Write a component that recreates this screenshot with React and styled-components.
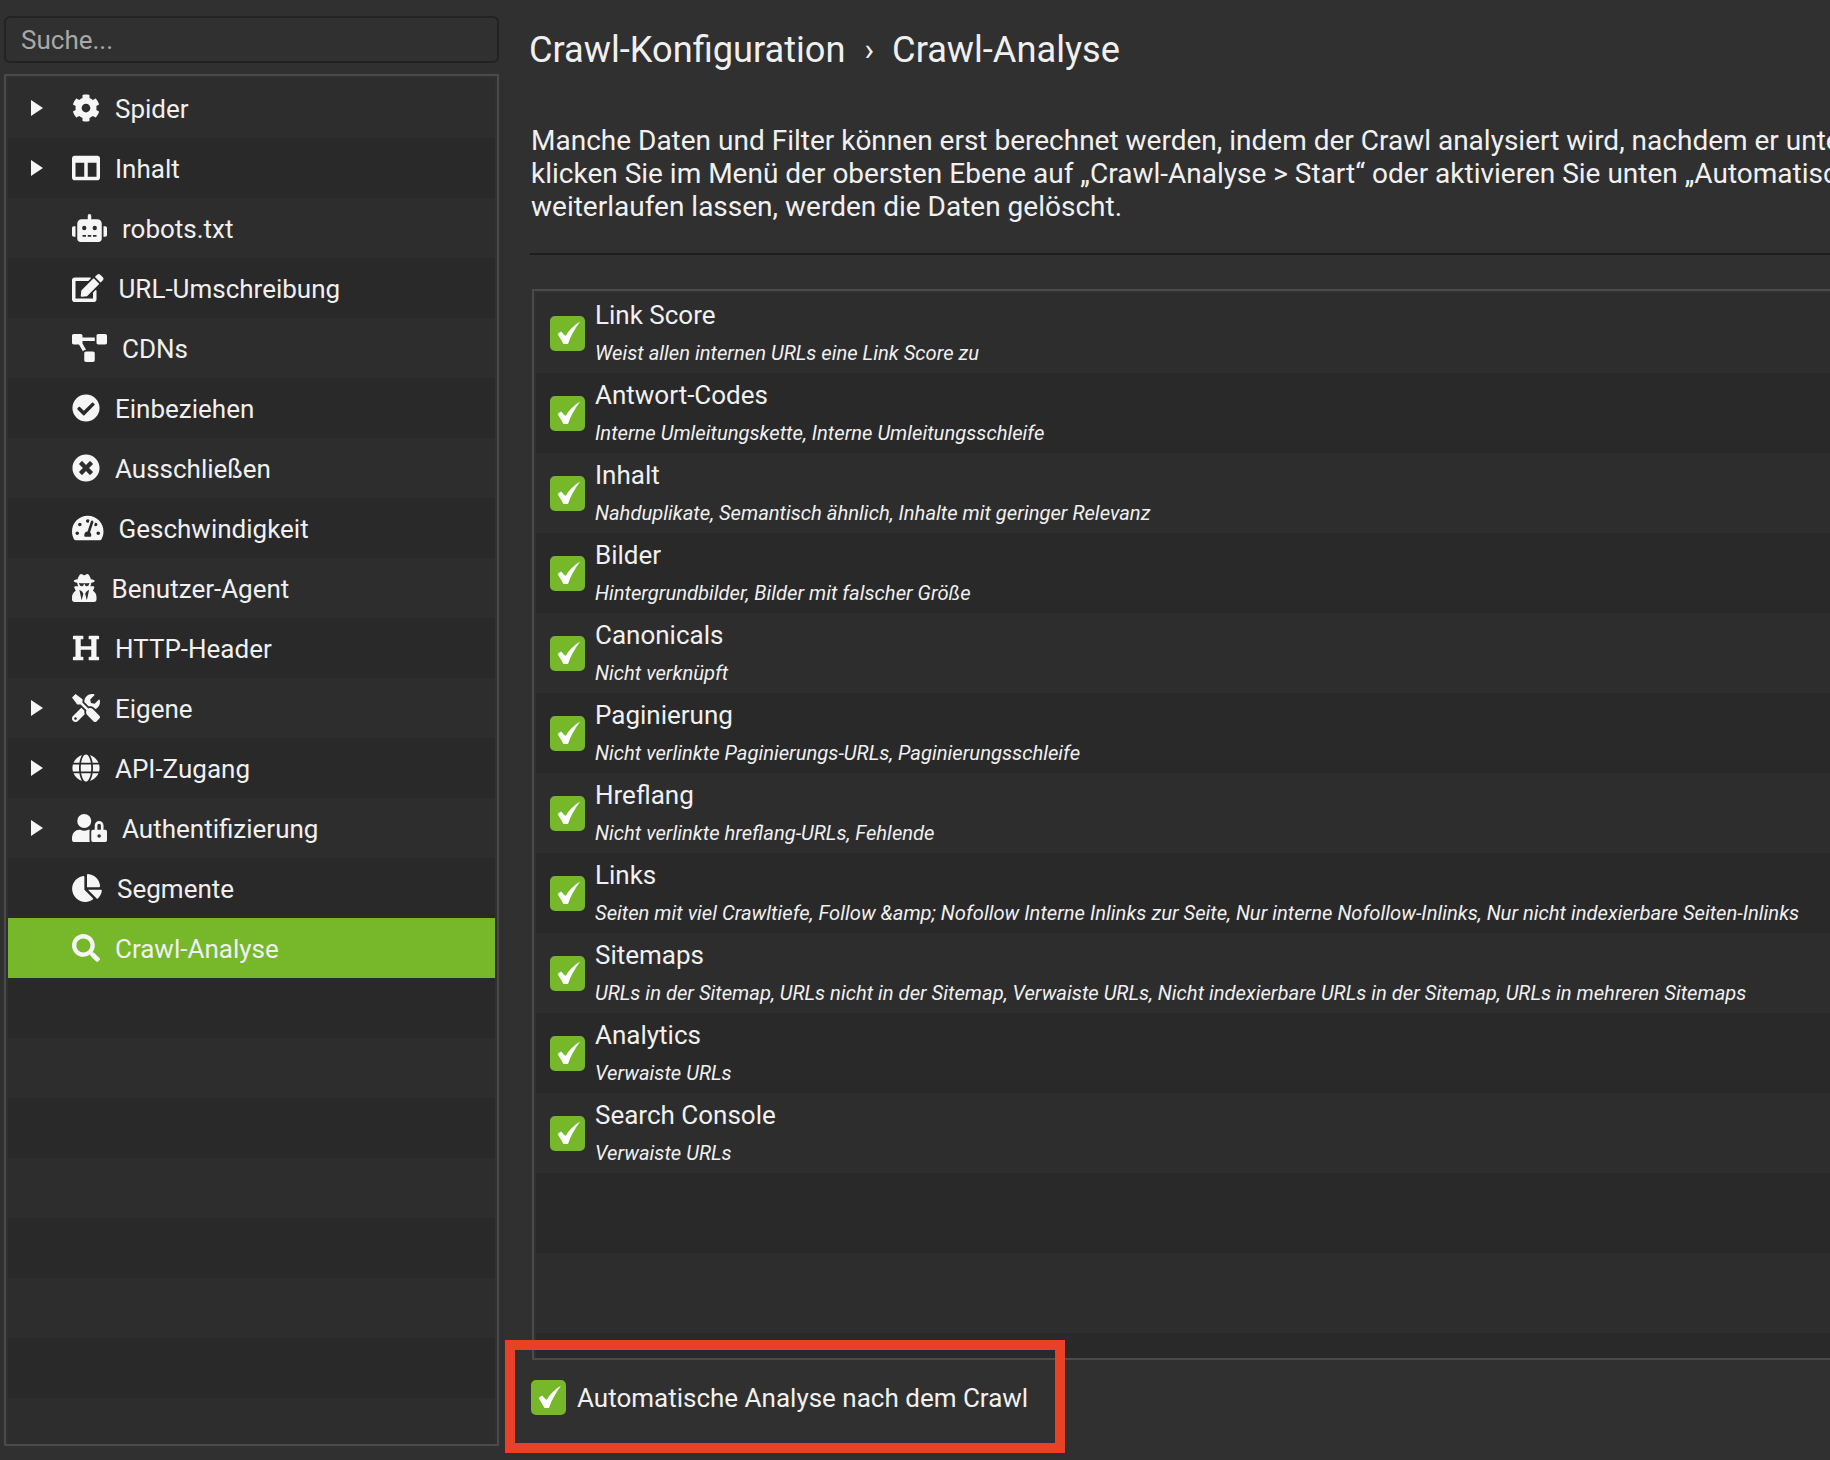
import React from 'react';
import styled, { createGlobalStyle } from 'styled-components';
import {
  FaCog, FaColumns, FaRobot, FaEdit, FaProjectDiagram, FaCheckCircle, FaTimesCircle,
  FaTachometerAlt, FaUserSecret, FaHeading, FaTools, FaGlobe, FaUserLock, FaChartPie, FaSearch,
} from 'react-icons/fa';

const GlobalStyle = createGlobalStyle`
  html, body {
    margin: 0;
    height: 100%;
    overflow: hidden;
    background: #303030;
  }
  * { box-sizing: border-box; }
`;

const Page = styled.div`
  display: flex;
  height: 1460px;
  width: 1830px;
  overflow: hidden;
  position: relative;
  background: #303030;
  color: #f0f0f0;
  font-family: Roboto, "Liberation Sans", sans-serif;
`;

const Sidebar = styled.aside`
  flex: 0 0 530px;
  display: flex;
  flex-direction: column;
  gap: 11px;
  padding: 16px 31px 14px 4px;
`;

const SearchInput = styled.input`
  height: 47px;
  flex: none;
  padding: 0 15px;
  background: #303030;
  border: 2px solid #222;
  border-radius: 6px;
  color: #f0f0f0;
  font: 26px Roboto, sans-serif;
  outline: none;

  &::placeholder {
    color: #a8a8a8;
    opacity: 1;
  }
`;

const Tree = styled.div`
  flex: 1;
  min-height: 0;
  overflow: hidden;
  border: 2px solid #4b4b4b;
  padding: 2px;
`;

const TreeRow = styled.div`
  display: flex;
  align-items: center;
  height: 60px;
  padding-left: 23px;
  font-size: 26px;
  color: #f0f0f0;
  background: ${(p) => (p.$active ? '#76b82a' : p.$dark ? '#292929' : '#2d2d2d')};
`;

const TreeLabel = styled.span`
  margin-top: 2px;
`;

const Arrow = styled.span`
  flex: none;
  width: 41px;
  height: 16px;
  visibility: ${(p) => (p.$hidden ? 'hidden' : 'visible')};

  &::before {
    content: '';
    display: block;
    width: 0;
    height: 0;
    border-style: solid;
    border-width: 8px 0 8px 12px;
    border-color: transparent transparent transparent #f6f6f6;
  }
`;

const IconBox = styled.span`
  flex: none;
  margin-right: 15px;
  color: #f6f6f6;

  svg {
    display: block;
    height: 28px;
    width: ${(p) => p.$width}px;
  }
`;

const Main = styled.main`
  flex: 1;
  min-width: 0;
  overflow: hidden;
`;

const Crumbs = styled.h1`
  display: flex;
  align-items: center;
  height: 44px;
  margin: 27px 0 0 -1px;
  font-size: 36.2px;
  font-weight: 400;
  white-space: nowrap;
`;

const CrumbSep = styled.span`
  margin: 0 18px 0 19px;
  font-size: 32px;
`;

const Intro = styled.p`
  margin: 53px 0 0 1px;
  font-size: 28px;
  line-height: 33px;
  white-space: nowrap;
`;

const Rule = styled.hr`
  width: 1400px;
  height: 2px;
  margin: 30px 0 0;
  border: 0;
  background: #1d1d1d;
`;

const FilterList = styled.div`
  width: 1400px;
  height: 1071px;
  margin: 34px 0 0 2px;
  padding: 2px 2px 0;
  overflow: hidden;
  border: 2px solid #4b4b4b;
  border-right: 0;
`;

const FilterRow = styled.div`
  display: flex;
  align-items: center;
  height: 80px;
  padding-left: 14px;
  background: ${(p) => (p.$dark ? '#292929' : '#2d2d2d')};
`;

const CheckBox = styled.span`
  flex: none;
  width: 35px;
  height: 35px;
  border-radius: 5px;
  background: #76b82a;

  svg {
    display: block;
    width: 35px;
    height: 35px;
  }
`;

const FilterText = styled.div`
  margin-left: 10px;
  display: flex;
  flex-direction: column;
  gap: 2px;
`;

const FilterTitle = styled.div`
  padding-top: 2px;
  font-size: 26px;
  line-height: 36px;
`;

const FilterNote = styled.div`
  font-size: 20.2px;
  font-style: italic;
  line-height: 36px;
  white-space: nowrap;
`;

const AutoRow = styled.label`
  display: flex;
  align-items: center;
  gap: 11px;
  margin-top: 20px;
  margin-left: 1px;
  font-size: 26px;
`;

const Callout = styled.div`
  position: absolute;
  left: 505px;
  top: 1340px;
  width: 560px;
  height: 113px;
  border: 10px solid #e84126;
  pointer-events: none;
`;

const Check = () => (
  <CheckBox>
    <svg viewBox="0 0 35 35">
      <path
        fill="#fff"
        d="M7.7 18 L11 15.5 L15.5 20 C19 14 24 9 30 5.7 C24.5 13 20.5 20 18 28 L13.5 28 Z"
      />
    </svg>
  </CheckBox>
);

const treeItems = [
  { label: 'Spider', icon: FaCog, width: 28, open: true },
  { label: 'Inhalt', icon: FaColumns, width: 28, open: true },
  { label: 'robots.txt', icon: FaRobot, width: 35 },
  { label: 'URL-Umschreibung', icon: FaEdit, width: 31.5 },
  { label: 'CDNs', icon: FaProjectDiagram, width: 35 },
  { label: 'Einbeziehen', icon: FaCheckCircle, width: 28 },
  { label: 'Ausschließen', icon: FaTimesCircle, width: 28 },
  { label: 'Geschwindigkeit', icon: FaTachometerAlt, width: 31.5 },
  { label: 'Benutzer-Agent', icon: FaUserSecret, width: 24.5 },
  { label: 'HTTP-Header', icon: FaHeading, width: 28 },
  { label: 'Eigene', icon: FaTools, width: 28, open: true },
  { label: 'API-Zugang', icon: FaGlobe, width: 28, open: true },
  { label: 'Authentifizierung', icon: FaUserLock, width: 35, open: true },
  { label: 'Segmente', icon: FaChartPie, width: 30 },
  { label: 'Crawl-Analyse', icon: FaSearch, width: 28, active: true },
];

const filters = [
  ['Link Score', 'Weist allen internen URLs eine Link Score zu'],
  ['Antwort-Codes', 'Interne Umleitungskette, Interne Umleitungsschleife'],
  ['Inhalt', 'Nahduplikate, Semantisch ähnlich, Inhalte mit geringer Relevanz'],
  ['Bilder', 'Hintergrundbilder, Bilder mit falscher Größe'],
  ['Canonicals', 'Nicht verknüpft'],
  ['Paginierung', 'Nicht verlinkte Paginierungs-URLs, Paginierungsschleife'],
  ['Hreflang', 'Nicht verlinkte hreflang-URLs, Fehlende'],
  ['Links', 'Seiten mit viel Crawltiefe, Follow &amp; Nofollow Interne Inlinks zur Seite, Nur interne Nofollow-Inlinks, Nur nicht indexierbare Seiten-Inlinks'],
  ['Sitemaps', 'URLs in der Sitemap, URLs nicht in der Sitemap, Verwaiste URLs, Nicht indexierbare URLs in der Sitemap, URLs in mehreren Sitemaps'],
  ['Analytics', 'Verwaiste URLs'],
  ['Search Console', 'Verwaiste URLs'],
];

const App = () => {
  return (
    <Page>
      <GlobalStyle />
      <Sidebar>
        <SearchInput placeholder="Suche..." />
        <Tree>
          {Array.from({ length: 23 }, (_, i) => {
            const item = treeItems[i];
            if (!item) return <TreeRow key={i} $dark={i % 2 === 1} />;
            const Icon = item.icon;
            return (
              <TreeRow key={item.label} $dark={i % 2 === 1} $active={item.active}>
                <Arrow $hidden={!item.open} />
                <IconBox $width={item.width}><Icon /></IconBox>
                <TreeLabel>{item.label}</TreeLabel>
              </TreeRow>
            );
          })}
        </Tree>
      </Sidebar>

      <Main>
        <Crumbs>
          Crawl-Konfiguration
          <CrumbSep>›</CrumbSep>
          Crawl-Analyse
        </Crumbs>
        <Intro>
          Manche Daten und Filter können erst berechnet werden, indem der Crawl analysiert wird, nachdem er unterbrochen wurde. Um die Analyse zu starten,
          <br />
          klicken Sie im Menü der obersten Ebene auf „Crawl-Analyse &gt; Start“ oder aktivieren Sie unten „Automatische Analyse nach dem Crawl“. Wenn Sie den Crawl
          <br />
          weiterlaufen lassen, werden die Daten gelöscht.
        </Intro>
        <Rule />
        <FilterList>
          {Array.from({ length: 14 }, (_, i) => {
            const row = filters[i];
            return (
              <FilterRow key={i} $dark={i % 2 === 1}>
                {row && <Check />}
                {row && (
                  <FilterText>
                    <FilterTitle>{row[0]}</FilterTitle>
                    <FilterNote>{row[1]}</FilterNote>
                  </FilterText>
                )}
              </FilterRow>
            );
          })}
        </FilterList>
        <AutoRow>
          <Check />
          Automatische Analyse nach dem Crawl
        </AutoRow>
      </Main>
      <Callout />
    </Page>
  );
};

export default App;
